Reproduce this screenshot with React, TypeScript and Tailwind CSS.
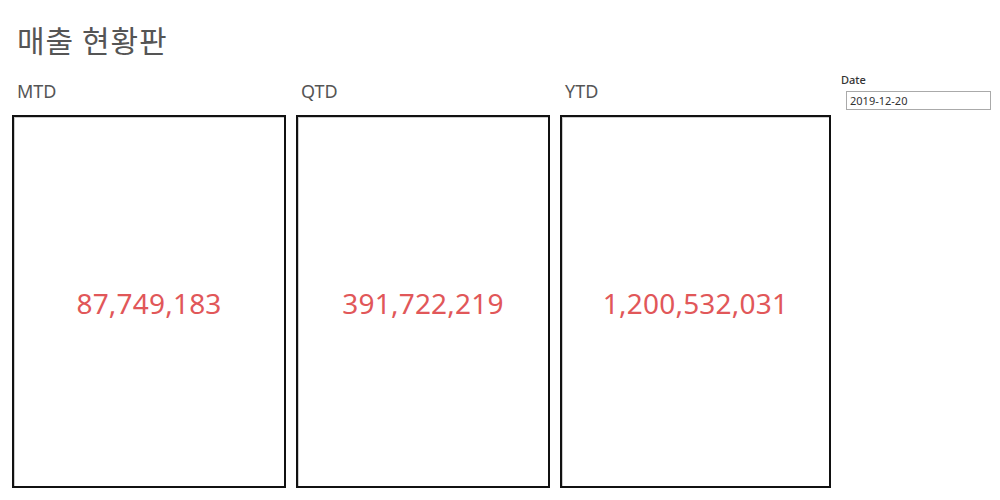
import React from 'react';

const cards = [
  { label: 'MTD', value: '87,749,183', width: 'w-[274px]' },
  { label: 'QTD', value: '391,722,219', width: 'w-[254px]' },
  { label: 'YTD', value: '1,200,532,031', width: 'w-[271px]' },
];

export default function App() {
  return (
    <div className="w-[1000px] h-[500px] bg-white overflow-hidden pl-[12px] pt-[19px] font-['Noto_Sans',sans-serif]">
      {/* title */}
      <h1 className="ml-[5px] text-[30px] leading-[40px] text-[#555] font-normal font-['Noto_Sans_CJK_KR',sans-serif] tracking-[1px]">
        매출 현황판
      </h1>

      <div className="flex gap-[10px] mt-[19px]">
        {cards.map((c) => (
          <div key={c.label} className={`${c.width} flex flex-col`}>
            <div className="ml-[5px] h-[37px] text-[18px] leading-[26px] text-[#555]">{c.label}</div>
            <div className="h-[373px] border-2 border-[#111] shadow-[inset_1px_1px_0_#ccc] flex items-center justify-center">
              <span className="text-[28px] text-[#e15759] tracking-[0.2px] mt-[2px]">{c.value}</span>
            </div>
          </div>
        ))}

        <div className="flex flex-col -mt-[6px]">
          <div className="text-[11px] leading-[16px] text-[#333] font-medium">Date</div>
          <div className="ml-[5px] mt-[3px] w-[145px] h-[19px] border border-[#aaa] px-[3px] text-[11px] leading-[17px] text-[#333]">
            2019-12-20
          </div>
        </div>
      </div>
    </div>
  );
}
